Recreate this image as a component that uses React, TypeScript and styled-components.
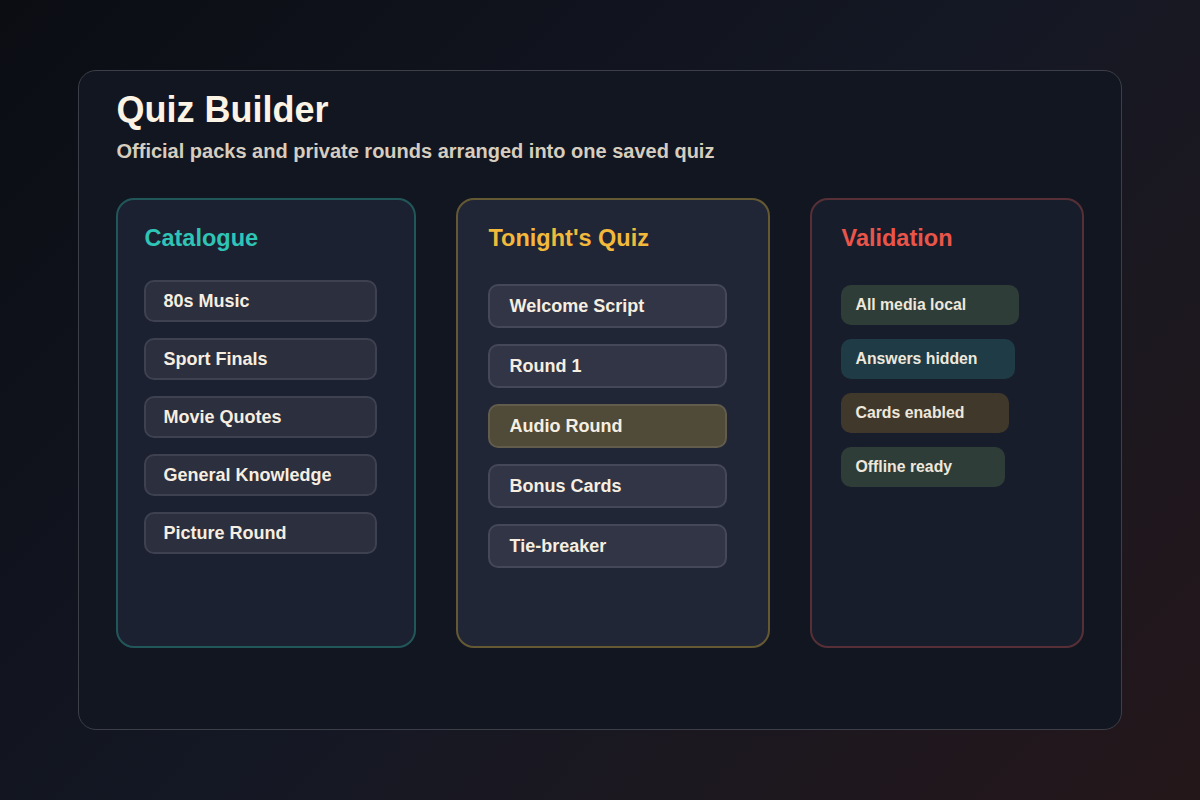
import styled, { createGlobalStyle } from "styled-components";

const GlobalStyle = createGlobalStyle`
  html, body {
    margin: 0;
    height: 100%;
  }
  body {
    font-family: "Liberation Sans", Arial, sans-serif;
    background: linear-gradient(135deg, #0b0d13 0%, #141824 50%, #24171a 100%);
  }
  #root {
    height: 100%;
  }
`;

type Tone = "teal" | "gold" | "red";

const tones: Record<Tone, { title: string; border: string; bg: string }> = {
  teal: { title: "#2ec4b6", border: "#22575a", bg: "#1c2131" },
  gold: { title: "#f2b93b", border: "#655934", bg: "#212637" },
  red: { title: "#ea554a", border: "#573037", bg: "#181d2b" },
};

const catalogue = ["80s Music", "Sport Finals", "Movie Quotes", "General Knowledge", "Picture Round"];

const tonight = [
  { label: "Welcome Script" },
  { label: "Round 1" },
  { label: "Audio Round", active: true },
  { label: "Bonus Cards" },
  { label: "Tie-breaker" },
];

const checks = [
  { label: "All media local", bg: "#2f3d38", width: 178 },
  { label: "Answers hidden", bg: "#1f3b46", width: 174 },
  { label: "Cards enabled", bg: "#40392b", width: 168 },
  { label: "Offline ready", bg: "#2f3d38", width: 164 },
];

export default function App() {
  return (
    <>
      <GlobalStyle />
      <StPage>
        <StPanel>
          <StTitle>Quiz Builder</StTitle>
          <StSubtitle>Official packs and private rounds arranged into one saved quiz</StSubtitle>

          <StColumns>
            <StCard $tone="teal" $padX={26}>
              <StCardTitle $tone="teal">Catalogue</StCardTitle>
              <StList $gap={16} $top={28}>
                {catalogue.map((name) => (
                  <StPack key={name}>{name}</StPack>
                ))}
              </StList>
            </StCard>

            <StCard $tone="gold" $padX={30}>
              <StCardTitle $tone="gold">Tonight's Quiz</StCardTitle>
              <StList $gap={16} $top={32}>
                {tonight.map((round) => (
                  <StRound key={round.label} $active={round.active}>
                    {round.label}
                  </StRound>
                ))}
              </StList>
            </StCard>

            <StCard $tone="red" $padX={29}>
              <StCardTitle $tone="red">Validation</StCardTitle>
              <StList $gap={14} $top={33}>
                {checks.map((check) => (
                  <StCheck key={check.label} $bg={check.bg} $width={check.width}>
                    {check.label}
                  </StCheck>
                ))}
              </StList>
            </StCard>
          </StColumns>
        </StPanel>
      </StPage>
    </>
  );
}

const StPage = styled.main`
  display: flex;
  justify-content: center;
  align-items: center;

  height: 100%;
`;

const StPanel = styled.section`
  box-sizing: border-box;
  width: 1044px;
  height: 660px;

  padding: 17px 36.5px 0;

  background-color: #121620;
  border: 1.5px solid #3d3f48;
  border-radius: 18px;
`;

const StTitle = styled.h1`
  margin: 0 0 0 1px;

  font-size: 36px;
  line-height: 1.2;
  font-weight: 700;
  color: #fbf3e3;
`;

const StSubtitle = styled.p`
  margin: 8px 0 0 1px;

  font-size: 20px;
  line-height: 1.2;
  font-weight: 700;
  color: #d6cdbf;
`;

const StColumns = styled.div`
  display: grid;
  grid-template-columns: 300px 314px 274px;
  gap: 40px;

  height: 450px;
  margin-top: 35px;
`;

const StCard = styled.article<{ $tone: Tone; $padX: number }>`
  box-sizing: border-box;

  padding: 24px ${({ $padX }) => $padX}px 0;

  background-color: ${({ $tone }) => tones[$tone].bg};
  border: 2px solid ${({ $tone }) => tones[$tone].border};
  border-radius: 18px;
`;

const StCardTitle = styled.h2<{ $tone: Tone }>`
  margin: 0 0 0 1px;

  font-size: 23.5px;
  line-height: 1.2;
  font-weight: 700;
  color: ${({ $tone }) => tones[$tone].title};
`;

const StList = styled.ul<{ $gap: number; $top: number }>`
  display: flex;
  flex-direction: column;
  align-items: flex-start;
  gap: ${({ $gap }) => $gap}px;

  margin: ${({ $top }) => $top}px 0 0;
  padding: 0;

  list-style: none;
`;

const StPack = styled.li`
  box-sizing: border-box;
  display: flex;
  align-items: center;

  width: 233px;
  height: 42px;
  padding: 0 18px;

  background-color: #2c2f3d;
  border: 2px solid #3e4150;
  border-radius: 10px;

  font-size: 18px;
  font-weight: 700;
  color: #f6eee1;
`;

const StRound = styled.li<{ $active?: boolean }>`
  box-sizing: border-box;
  display: flex;
  align-items: center;

  width: 239px;
  height: 44px;
  padding: 0 20px;

  background-color: ${({ $active }) => ($active ? "#504a38" : "#323545")};
  border: 2px solid ${({ $active }) => ($active ? "#615c4c" : "#454858")};
  border-radius: 10px;

  font-size: 18px;
  font-weight: 700;
  color: #f6eee1;
`;

const StCheck = styled.li<{ $bg: string; $width: number }>`
  box-sizing: border-box;
  display: flex;
  align-items: center;

  width: ${({ $width }) => $width}px;
  height: 40px;
  padding: 0 15px;

  background-color: ${({ $bg }) => $bg};
  border-radius: 10px;

  font-size: 15.8px;
  font-weight: 700;
  color: #eee8dc;
`;
